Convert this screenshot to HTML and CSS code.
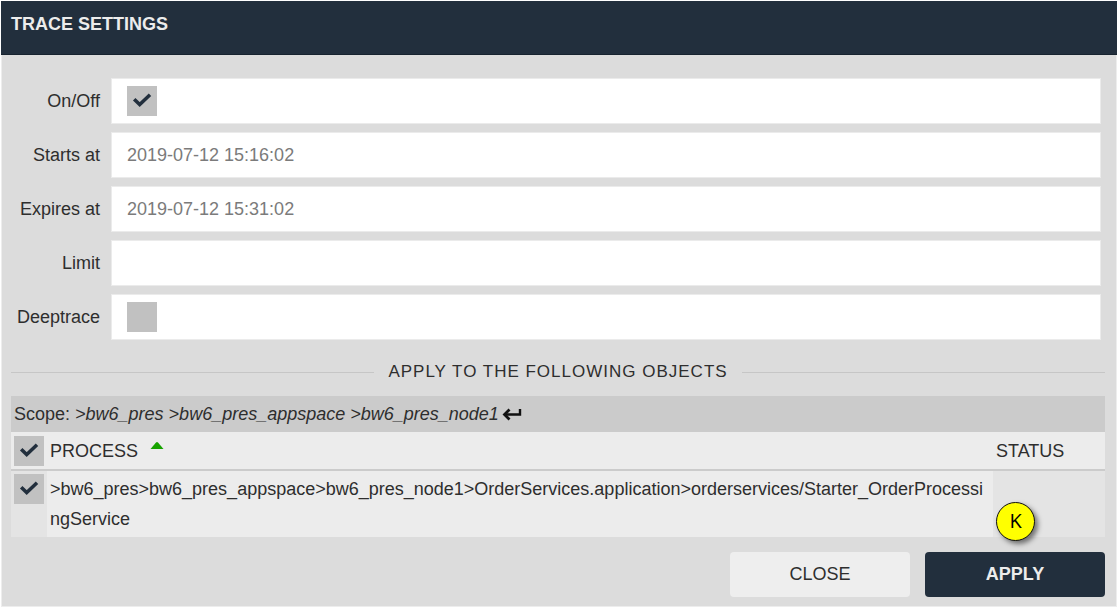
FILE: index.html
```html
<!DOCTYPE html>
<html lang="en">
<head>
<meta charset="utf-8">
<title>Trace settings</title>
<link rel="stylesheet" href="styles.css">
</head>
<body>
<svg class="sprite" aria-hidden="true">
  <symbol id="check" viewBox="0 0 30 30"><path d="M7.200 13.200l5.500 5.300L23 8.800" fill="none" stroke="#222f3d" stroke-width="3.500"/></symbol>
</svg>
<main class="dialog">
  <header class="dialog-header"><h1 class="dialog-title">TRACE SETTINGS</h1></header>
  <form class="dialog-body">
    <div class="fields">
      <label class="field-label" for="onoff">On/Off</label>
      <div class="field"><span class="tick"><input class="tick-box" type="checkbox" id="onoff" checked><svg class="tick-mark"><use href="#check"/></svg></span></div>
      <label class="field-label" for="starts">Starts at</label>
      <input class="field" type="text" id="starts" value="2019-07-12 15:16:02">
      <label class="field-label" for="expires">Expires at</label>
      <input class="field" type="text" id="expires" value="2019-07-12 15:31:02">
      <label class="field-label" for="limit">Limit</label>
      <input class="field" type="text" id="limit">
      <label class="field-label" for="deep">Deeptrace</label>
      <div class="field"><span class="tick"><input class="tick-box" type="checkbox" id="deep"><svg class="tick-mark"><use href="#check"/></svg></span></div>
    </div>
    <h2 class="divider">APPLY TO THE FOLLOWING OBJECTS</h2>
    <div class="scope"><span>Scope: <em>&gt;bw6_pres &gt;bw6_pres_appspace &gt;bw6_pres_node1</em></span>
      <svg class="scope-icon" viewBox="0 0 20 14" aria-hidden="true"><path d="M18 2v5.500H4" fill="none" stroke="#111" stroke-width="2.400"/><path d="M7.500 2.500l-5 5 5 5" fill="none" stroke="#111" stroke-width="2.800"/></svg>
    </div>
    <table class="objects">
      <thead>
        <tr>
          <th class="col-tick"><span class="tick"><input class="tick-box" type="checkbox" aria-label="Select all" checked><svg class="tick-mark"><use href="#check"/></svg></span></th>
          <th class="col-process"><span class="sorted">PROCESS<svg class="sort-icon" viewBox="0 0 14 8" aria-hidden="true"><path d="M0.500 8l5.500-6.500q1-1 2 0L13.500 8z" fill="#17a300"/></svg></span></th>
          <th class="col-status">STATUS</th>
        </tr>
      </thead>
      <tbody>
        <tr>
          <td class="col-tick"><span class="tick"><input class="tick-box" type="checkbox" aria-label="Select process" checked><svg class="tick-mark"><use href="#check"/></svg></span></td>
          <td class="col-process">&gt;bw6_pres&gt;bw6_pres_appspace&gt;bw6_pres_node1&gt;OrderServices.application&gt;orderservices/Starter_OrderProcessingService</td>
          <td class="col-status"></td>
        </tr>
      </tbody>
    </table>
    <div class="actions">
      <button class="button" type="button">CLOSE</button>
      <button class="button button-primary" type="submit">APPLY</button>
      <span class="marker">K</span>
    </div>
  </form>
</main>
</body>
</html>
```
FILE: styles.css
```css
* { box-sizing: border-box; }

body {
  margin: 0;
  padding: 1px;
  background: #fff;
  color: #2e2e2e;
  font-family: "Liberation Sans", Arial, sans-serif;
  font-size: 18px;
}

.sprite { position: absolute; width: 0; height: 0; }

.dialog {
  background: #dcdcdc;
}

.dialog-header {
  height: 54px;
  padding: 13px 10px;
  background: #222f3d;
  border-bottom: 1px solid #17232f;
}

.dialog-title {
  margin: 0;
  color: #ececec;
  font-size: 18px;
  line-height: 20px;
}

.dialog-body {
  padding: 23px 11px 9px 9px;
  border: solid #ededed;
  border-width: 0 1px 1px;
}

.fields {
  display: grid;
  grid-template-columns: 89px 1fr;
  gap: 8px 11px;
  padding-right: 4px;
}

.field-label {
  align-self: center;
  text-align: right;
}

.field {
  display: flex;
  align-items: center;
  width: 100%;
  height: 46px;
  padding: 0 15px;
  background: #fff;
  border: 1px solid #ebebeb;
  border-radius: 0;
  color: #7b7b7b;
  font: inherit;
}

.tick { display: inline-grid; vertical-align: top; }

.tick-box {
  grid-area: 1 / 1;
  appearance: none;
  width: 30px;
  height: 30px;
  margin: 0;
  background: #c1c1c1;
}

.tick-mark {
  grid-area: 1 / 1;
  width: 30px;
  height: 30px;
  visibility: hidden;
  pointer-events: none;
}

.tick-box:checked + .tick-mark { visibility: visible; }

.divider {
  display: flex;
  align-items: center;
  gap: 14px;
  margin: 22px 0 14px;
  font-size: 17px;
  font-weight: normal;
  line-height: 20px;
  letter-spacing: 1px;
}

.divider::before,
.divider::after {
  content: "";
  flex: 1;
  height: 1px;
  background: #c6c6c6;
}

.scope {
  display: flex;
  align-items: center;
  gap: 3px;
  height: 36px;
  padding: 0 3px;
  background: #cbcbcb;
}

.scope-icon { width: 20px; height: 14px; }

.objects {
  width: 100%;
  border-collapse: separate;
  border-spacing: 0;
  table-layout: fixed;
}

.objects th {
  padding: 4px 3px 3px;
  height: 39px;
  background: #ececec;
  border-bottom: 2px solid #cbcbcb;
  font-weight: normal;
  text-align: left;
}

.objects td {
  padding: 3px;
  height: 66px;
  background: #e4e4e4;
  line-height: 30px;
  vertical-align: top;
}

.objects td.col-process {
  background: #ececec;
  word-break: break-all;
}

.col-tick { width: 36px; }
.col-status { width: 112px; }

.sorted { display: flex; gap: 12px; }
.sort-icon { width: 14px; height: 8px; }

.actions {
  position: relative;
  display: flex;
  justify-content: flex-end;
  gap: 15px;
  margin-top: 15px;
}

.button {
  width: 180px;
  height: 45px;
  padding: 0;
  background: #eee;
  border: 0;
  border-radius: 4px;
  color: #2e2e2e;
  font: inherit;
}

.button-primary {
  background: #222f3d;
  color: #ececec;
  font-weight: bold;
}

.marker {
  position: absolute;
  top: -50px;
  right: 70px;
  width: 39px;
  height: 39px;
  background: #ff0;
  border: 1px solid #111;
  border-radius: 50%;
  box-shadow: 3px 3px 5px rgba(0, 0, 0, 0.5);
  color: #000;
  font-family: "Open Sans", sans-serif;
  font-size: 20px;
  line-height: 36px;
  text-align: center;
}
```
